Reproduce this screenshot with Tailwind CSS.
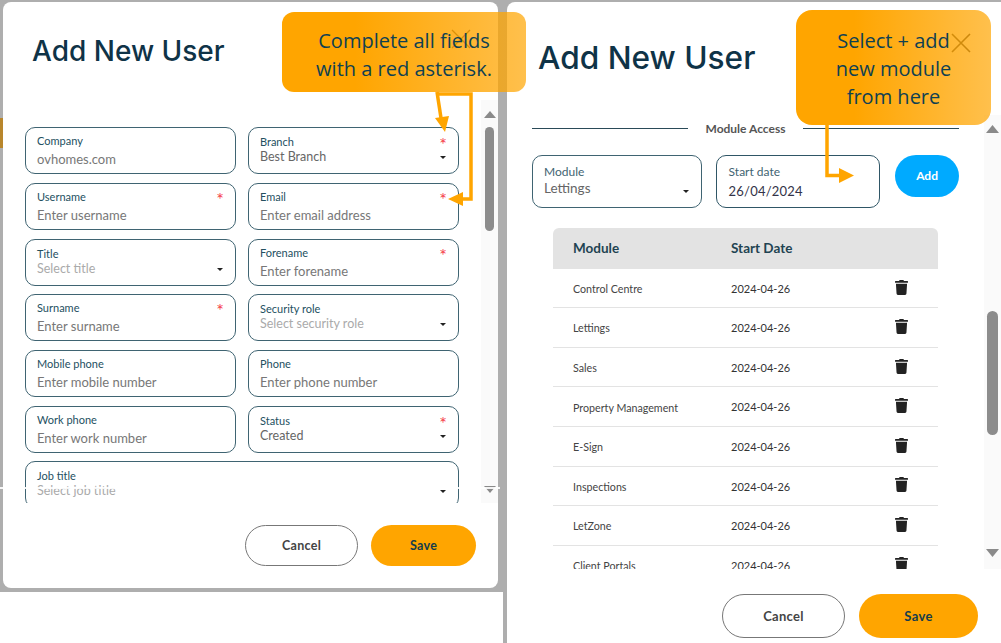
<!DOCTYPE html>
<html lang="en">
<head>
    <meta charset="UTF-8">
    <title>Add New User</title>
    <script src="https://cdn.jsdelivr.net/npm/@tailwindcss/browser@4"></script>
</head>
<body class="relative w-[1001px] h-[643px] overflow-hidden bg-white flex font-['Lato',sans-serif]">

    <!-- Left: user details -->
    <section class="w-[503px] h-[592px] bg-[#aeaeae] pl-[3px] pr-[5px] pt-[2px] pb-[4px]">
        <div class="h-full bg-white rounded-[8px] flex flex-col">
            <div class="h-[98px] pl-[29px] pt-[29px]">
                <h1 class="text-[28px] leading-[40px] font-medium text-[#0f3347] font-['Inter',sans-serif]">Add New User</h1>
            </div>

            <div class="h-[403px] flex overflow-hidden">
                <div class="w-[478px] pl-[22px] pt-[27.3px]">
                    <div class="grid grid-cols-[211px_211px] gap-x-[12px] gap-y-[8.7px]">
                        <div class="h-[47px] rounded-[10px] border border-[#3f6472] px-[11px] pt-[6px]">
                            <div class="text-[11px] leading-[14px] text-[#24505f]">Company</div>
                            <div class="text-[13px] leading-[18px] mt-[2px] text-[#777]">ovhomes.com</div>
                        </div>
                        <div class="h-[47px] rounded-[10px] border border-[#3f6472] px-[11px] pt-[7px]">
                            <div class="flex justify-between h-[14px] text-[11px] leading-[14px] text-[#24505f]"><span>Branch</span><span class="text-[18px] leading-[18px] text-[#f5404a]">*</span></div>
                            <div class="flex justify-between items-center text-[12.5px] leading-[15px] text-[#666]"><span>Best Branch</span><span class="w-0 h-0 mt-[2px] mr-[1px] border-x-[3px] border-x-transparent border-t-[3px] border-t-[#222]"></span></div>
                        </div>

                        <div class="h-[47px] rounded-[10px] border border-[#3f6472] px-[11px] pt-[6px]">
                            <div class="flex justify-between h-[14px] text-[11px] leading-[14px] text-[#24505f]"><span>Username</span><span class="text-[18px] leading-[18px] text-[#f5404a]">*</span></div>
                            <div class="text-[13px] leading-[18px] mt-[2px] text-[#777]">Enter username</div>
                        </div>
                        <div class="h-[47px] rounded-[10px] border border-[#3f6472] px-[11px] pt-[6px]">
                            <div class="flex justify-between h-[14px] text-[11px] leading-[14px] text-[#24505f]"><span>Email</span><span class="text-[18px] leading-[18px] text-[#f5404a]">*</span></div>
                            <div class="text-[13px] leading-[18px] mt-[2px] text-[#777]">Enter email address</div>
                        </div>

                        <div class="h-[47px] rounded-[10px] border border-[#3f6472] px-[11px] pt-[7px]">
                            <div class="text-[11px] leading-[14px] text-[#24505f]">Title</div>
                            <div class="flex justify-between items-center text-[12.5px] leading-[15px] text-[#aaa]"><span>Select title</span><span class="w-0 h-0 mt-[2px] mr-[1px] border-x-[3px] border-x-transparent border-t-[3px] border-t-[#222]"></span></div>
                        </div>
                        <div class="h-[47px] rounded-[10px] border border-[#3f6472] px-[11px] pt-[6px]">
                            <div class="flex justify-between h-[14px] text-[11px] leading-[14px] text-[#24505f]"><span>Forename</span><span class="text-[18px] leading-[18px] text-[#f5404a]">*</span></div>
                            <div class="text-[13px] leading-[18px] mt-[2px] text-[#777]">Enter forename</div>
                        </div>

                        <div class="h-[47px] rounded-[10px] border border-[#3f6472] px-[11px] pt-[6px]">
                            <div class="flex justify-between h-[14px] text-[11px] leading-[14px] text-[#24505f]"><span>Surname</span><span class="text-[18px] leading-[18px] text-[#f5404a]">*</span></div>
                            <div class="text-[13px] leading-[18px] mt-[2px] text-[#777]">Enter surname</div>
                        </div>
                        <div class="h-[47px] rounded-[10px] border border-[#3f6472] px-[11px] pt-[7px]">
                            <div class="text-[11px] leading-[14px] text-[#24505f]">Security role</div>
                            <div class="flex justify-between items-center text-[12.5px] leading-[15px] text-[#aaa]"><span>Select security role</span><span class="w-0 h-0 mt-[2px] mr-[1px] border-x-[3px] border-x-transparent border-t-[3px] border-t-[#222]"></span></div>
                        </div>

                        <div class="h-[47px] rounded-[10px] border border-[#3f6472] px-[11px] pt-[6px]">
                            <div class="text-[11px] leading-[14px] text-[#24505f]">Mobile phone</div>
                            <div class="text-[13px] leading-[18px] mt-[2px] text-[#777]">Enter mobile number</div>
                        </div>
                        <div class="h-[47px] rounded-[10px] border border-[#3f6472] px-[11px] pt-[6px]">
                            <div class="text-[11px] leading-[14px] text-[#24505f]">Phone</div>
                            <div class="text-[13px] leading-[18px] mt-[2px] text-[#777]">Enter phone number</div>
                        </div>

                        <div class="h-[47px] rounded-[10px] border border-[#3f6472] px-[11px] pt-[6px]">
                            <div class="text-[11px] leading-[14px] text-[#24505f]">Work phone</div>
                            <div class="text-[13px] leading-[18px] mt-[2px] text-[#777]">Enter work number</div>
                        </div>
                        <div class="h-[47px] rounded-[10px] border border-[#3f6472] px-[11px] pt-[7px]">
                            <div class="flex justify-between h-[14px] text-[11px] leading-[14px] text-[#24505f]"><span>Status</span><span class="text-[18px] leading-[18px] text-[#f5404a]">*</span></div>
                            <div class="flex justify-between items-center text-[12.5px] leading-[15px] text-[#666]"><span>Created</span><span class="w-0 h-0 mt-[2px] mr-[1px] border-x-[3px] border-x-transparent border-t-[3px] border-t-[#222]"></span></div>
                        </div>

                        <div class="col-span-2 h-[47px] rounded-[10px] border border-[#3f6472] px-[11px] pt-[7px]">
                            <div class="text-[11px] leading-[14px] text-[#24505f]">Job title</div>
                            <div class="flex justify-between items-center text-[12.5px] leading-[15px] text-[#aaa]"><span>Select job title</span><span class="w-0 h-0 mt-[2px] mr-[1px] border-x-[3px] border-x-transparent border-t-[3px] border-t-[#222]"></span></div>
                        </div>
                    </div>
                </div>

                <!-- scrollbar -->
                <div class="w-[17px] bg-[#fafafa] flex flex-col items-center pt-[11px]">
                    <svg class="shrink-0" width="12" height="7" viewBox="0 0 12 7"><path d="M6 0L12 7H0z" fill="#8a8a8a"/></svg>
                    <div class="w-[9px] h-[104px] mt-[9px] rounded-full bg-[#8c8c8c]"></div>
                    <svg class="shrink-0 mt-[255px]" width="12" height="7" viewBox="0 0 12 7"><path d="M0 0H12L6 7z" fill="#8a8a8a"/></svg>
                </div>
            </div>

            <div class="flex justify-end gap-[13px] pr-[22px] pt-[22px]">
                <button class="w-[113px] h-[41px] pt-[1px] rounded-full border border-[#777] bg-white text-[12.5px] tracking-[0.3px] font-bold text-[#444]">Cancel</button>
                <button class="w-[105px] h-[41px] pt-[1px] rounded-full bg-[#ffa500] text-[12.5px] tracking-[0.3px] font-bold text-[#143c4c]">Save</button>
            </div>
        </div>
    </section>

    <!-- Right: module access -->
    <section class="flex-1 h-full bg-[#aeaeae] pl-[4px] pt-[2px]">
        <div class="h-full bg-white rounded-tl-[8px] flex flex-col">
            <div class="h-[113px] pl-[31px] pt-[36px]">
                <h1 class="text-[31.6px] leading-[40px] font-medium text-[#0f3347] font-['Inter',sans-serif]">Add New User</h1>
            </div>

            <div class="h-[454px] flex overflow-hidden">
                <div class="w-[477px] pl-[25px]">
                    <div class="flex items-center h-[26px] w-[427px]">
                        <div class="w-[156px] h-px bg-[#2a4a58]"></div>
                        <div class="flex-1 pt-[1px] text-center text-[12px] font-bold text-[#555]">Module Access</div>
                        <div class="w-[156px] h-px bg-[#2a4a58]"></div>
                    </div>

                    <div class="flex items-start mt-[14px] w-[427px]">
                        <div class="w-[170px] h-[53px] rounded-[10px] border border-[#3f6472] pl-[11px] pr-[12px] pt-[8px]">
                            <div class="text-[12px] leading-[15px] text-[#3f6472]">Module</div>
                            <div class="flex justify-between items-center text-[13.5px] leading-[18px] text-[#666]"><span>Lettings</span><span class="w-0 h-0 mt-[6px] border-x-[3px] border-x-transparent border-t-[3px] border-t-[#222]"></span></div>
                        </div>
                        <div class="w-[165px] h-[53px] ml-[14px] rounded-[10px] border border-[#2f5666] pl-[12px] pt-[8px]">
                            <div class="text-[12px] leading-[15px] text-[#3f6472]">Start date</div>
                            <div class="text-[13px] leading-[18px] mt-[3px] tracking-[0.2px] text-[#333348]">26/04/2024</div>
                        </div>
                        <button class="w-[64px] h-[42px] ml-[15px] rounded-full bg-[#00aaff] text-[12px] font-bold text-white">Add</button>
                    </div>

                    <table class="w-[385px] ml-[21px] mt-[20px] table-fixed border-collapse">
                        <thead>
                            <tr class="h-[41px] bg-[#e3e3e3] text-[13.5px] text-[#1f4352] text-left">
                                <th class="w-[178px] pl-[20px] rounded-tl-[6px] font-bold">Module</th>
                                <th class="w-[150px] font-bold">Start Date</th>
                                <th class="rounded-tr-[6px]"></th>
                            </tr>
                        </thead>
                        <tbody class="text-[10.7px] text-[#444] [&_td]:pt-[2px]">
                            <tr class="h-[38.7px] border-b border-[#e3e3e3]">
                                <td class="pl-[20px]">Control Centre</td><td class="text-[11px] text-[#333]">2024-04-26</td>
                                <td class="pl-[14px]"><svg class="mb-[4px]" width="13" height="15" viewBox="0 0 448 512"><path fill="#222" d="M432 32H312l-9.4-18.7A24 24 0 0 0 281.1 0H166.8a23.72 23.72 0 0 0-21.4 13.3L136 32H16A16 16 0 0 0 0 48v32a16 16 0 0 0 16 16h416a16 16 0 0 0 16-16V48a16 16 0 0 0-16-16zM53.2 467a48 48 0 0 0 47.9 45h245.8a48 48 0 0 0 47.9-45L416 128H32z"/></svg></td>
                            </tr>
                            <tr class="h-[39.6px] border-b border-[#e3e3e3]">
                                <td class="pl-[20px]">Lettings</td><td class="text-[11px] text-[#333]">2024-04-26</td>
                                <td class="pl-[14px]"><svg class="mb-[4px]" width="13" height="15" viewBox="0 0 448 512"><path fill="#222" d="M432 32H312l-9.4-18.7A24 24 0 0 0 281.1 0H166.8a23.72 23.72 0 0 0-21.4 13.3L136 32H16A16 16 0 0 0 0 48v32a16 16 0 0 0 16 16h416a16 16 0 0 0 16-16V48a16 16 0 0 0-16-16zM53.2 467a48 48 0 0 0 47.9 45h245.8a48 48 0 0 0 47.9-45L416 128H32z"/></svg></td>
                            </tr>
                            <tr class="h-[39.6px] border-b border-[#e3e3e3]">
                                <td class="pl-[20px]">Sales</td><td class="text-[11px] text-[#333]">2024-04-26</td>
                                <td class="pl-[14px]"><svg class="mb-[4px]" width="13" height="15" viewBox="0 0 448 512"><path fill="#222" d="M432 32H312l-9.4-18.7A24 24 0 0 0 281.1 0H166.8a23.72 23.72 0 0 0-21.4 13.3L136 32H16A16 16 0 0 0 0 48v32a16 16 0 0 0 16 16h416a16 16 0 0 0 16-16V48a16 16 0 0 0-16-16zM53.2 467a48 48 0 0 0 47.9 45h245.8a48 48 0 0 0 47.9-45L416 128H32z"/></svg></td>
                            </tr>
                            <tr class="h-[39.6px] border-b border-[#e3e3e3]">
                                <td class="pl-[20px]">Property Management</td><td class="text-[11px] text-[#333]">2024-04-26</td>
                                <td class="pl-[14px]"><svg class="mb-[4px]" width="13" height="15" viewBox="0 0 448 512"><path fill="#222" d="M432 32H312l-9.4-18.7A24 24 0 0 0 281.1 0H166.8a23.72 23.72 0 0 0-21.4 13.3L136 32H16A16 16 0 0 0 0 48v32a16 16 0 0 0 16 16h416a16 16 0 0 0 16-16V48a16 16 0 0 0-16-16zM53.2 467a48 48 0 0 0 47.9 45h245.8a48 48 0 0 0 47.9-45L416 128H32z"/></svg></td>
                            </tr>
                            <tr class="h-[39.6px] border-b border-[#e3e3e3]">
                                <td class="pl-[20px]">E-Sign</td><td class="text-[11px] text-[#333]">2024-04-26</td>
                                <td class="pl-[14px]"><svg class="mb-[4px]" width="13" height="15" viewBox="0 0 448 512"><path fill="#222" d="M432 32H312l-9.4-18.7A24 24 0 0 0 281.1 0H166.8a23.72 23.72 0 0 0-21.4 13.3L136 32H16A16 16 0 0 0 0 48v32a16 16 0 0 0 16 16h416a16 16 0 0 0 16-16V48a16 16 0 0 0-16-16zM53.2 467a48 48 0 0 0 47.9 45h245.8a48 48 0 0 0 47.9-45L416 128H32z"/></svg></td>
                            </tr>
                            <tr class="h-[39.6px] border-b border-[#e3e3e3]">
                                <td class="pl-[20px]">Inspections</td><td class="text-[11px] text-[#333]">2024-04-26</td>
                                <td class="pl-[14px]"><svg class="mb-[4px]" width="13" height="15" viewBox="0 0 448 512"><path fill="#222" d="M432 32H312l-9.4-18.7A24 24 0 0 0 281.1 0H166.8a23.72 23.72 0 0 0-21.4 13.3L136 32H16A16 16 0 0 0 0 48v32a16 16 0 0 0 16 16h416a16 16 0 0 0 16-16V48a16 16 0 0 0-16-16zM53.2 467a48 48 0 0 0 47.9 45h245.8a48 48 0 0 0 47.9-45L416 128H32z"/></svg></td>
                            </tr>
                            <tr class="h-[39.6px] border-b border-[#e3e3e3]">
                                <td class="pl-[20px]">LetZone</td><td class="text-[11px] text-[#333]">2024-04-26</td>
                                <td class="pl-[14px]"><svg class="mb-[4px]" width="13" height="15" viewBox="0 0 448 512"><path fill="#222" d="M432 32H312l-9.4-18.7A24 24 0 0 0 281.1 0H166.8a23.72 23.72 0 0 0-21.4 13.3L136 32H16A16 16 0 0 0 0 48v32a16 16 0 0 0 16 16h416a16 16 0 0 0 16-16V48a16 16 0 0 0-16-16zM53.2 467a48 48 0 0 0 47.9 45h245.8a48 48 0 0 0 47.9-45L416 128H32z"/></svg></td>
                            </tr>
                            <tr class="h-[39.6px]">
                                <td class="pl-[20px]">Client Portals</td><td class="text-[11px] text-[#333]">2024-04-26</td>
                                <td class="pl-[14px]"><svg class="mb-[4px]" width="13" height="15" viewBox="0 0 448 512"><path fill="#222" d="M432 32H312l-9.4-18.7A24 24 0 0 0 281.1 0H166.8a23.72 23.72 0 0 0-21.4 13.3L136 32H16A16 16 0 0 0 0 48v32a16 16 0 0 0 16 16h416a16 16 0 0 0 16-16V48a16 16 0 0 0-16-16zM53.2 467a48 48 0 0 0 47.9 45h245.8a48 48 0 0 0 47.9-45L416 128H32z"/></svg></td>
                            </tr>
                        </tbody>
                    </table>
                </div>

                <!-- scrollbar -->
                <div class="w-[17px] bg-[#fafafa] flex flex-col items-center pt-[10px]">
                    <svg class="shrink-0" width="13" height="8" viewBox="0 0 13 8"><path d="M6.5 0L13 8H0z" fill="#8a8a8a"/></svg>
                    <div class="w-[11px] h-[124px] mt-[178px] rounded-full bg-[#8c8c8c]"></div>
                    <svg class="shrink-0 mt-[114px]" width="13" height="8" viewBox="0 0 13 8"><path d="M0 0H13L6.5 8z" fill="#8a8a8a"/></svg>
                </div>
            </div>

            <div class="flex justify-end gap-[14px] pr-[23px] pt-[25px]">
                <button class="w-[123px] h-[44px] pt-[1px] rounded-full border border-[#777] bg-white text-[13px] tracking-[0.3px] font-bold text-[#444]">Cancel</button>
                <button class="w-[119px] h-[44px] pt-[1px] rounded-full bg-[#ffa500] text-[13px] tracking-[0.3px] font-bold text-[#143c4c]">Save</button>
            </div>
        </div>
    </section>

    <!-- close icons sit under the callouts -->
    <svg class="absolute left-[451px] top-[29px]" width="20" height="20" viewBox="0 0 20 20"><path d="M1 1L19 19M19 1L1 19" stroke="#333" stroke-width="1.3" fill="none"/></svg>
    <svg class="absolute left-[951px] top-[33px]" width="20" height="20" viewBox="0 0 20 20"><path d="M1 1L19 19M19 1L1 19" stroke="#333" stroke-width="1.6" fill="none"/></svg>

    <!-- screenshot seam and edge artefacts -->
    <div class="absolute left-0 top-[487px] w-[500px] h-[2px] bg-white/90"></div>
    <div class="absolute left-0 top-[118px] w-[3px] h-[30px] bg-[#b8862c]"></div>

    <!-- callouts -->
    <div class="absolute left-[282px] top-[12px] w-[244px] h-[80px] pt-[6px] rounded-[12px] bg-linear-to-r from-[#ffa500] from-30% to-[#ffa500]/70 flex items-center justify-center text-center text-[20px] leading-[28px] text-[#0f4152] font-['Open_Sans',sans-serif]">
        <div>Complete all fields<br>with a red asterisk.</div>
    </div>
    <div class="absolute left-[796px] top-[10px] w-[195px] h-[115px] pt-[2px] rounded-[16px] bg-linear-to-r from-[#ffa500] from-30% to-[#ffa500]/70 flex items-center justify-center text-center text-[20px] leading-[28px] text-[#0f4152] font-['Open_Sans',sans-serif]">
        <div>Select + add<br>new module<br>from here</div>
    </div>

    <!-- arrows -->
    <svg class="absolute left-0 top-0 pointer-events-none" width="1001" height="643" viewBox="0 0 1001 643">
        <g fill="none" stroke="#ffa500" stroke-width="3.5">
            <path d="M437 92L441 118"/>
            <path d="M438 94H471V199H458"/>
            <path d="M827 57V175.500H842"/>
        </g>
        <g fill="#ffa500">
            <path d="M435 118L449 116L445 132z"/>
            <path d="M448 199L463 192V206z"/>
            <path d="M854 175.500L839 168V183z"/>
        </g>
    </svg>
</body>
</html>
